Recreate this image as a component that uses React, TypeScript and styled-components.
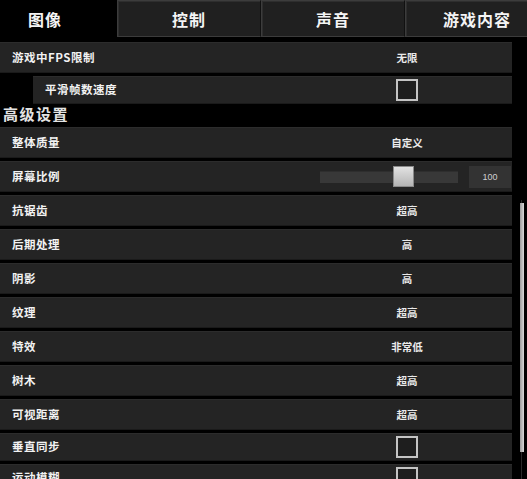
import React, {FC} from 'react';
import styled, {createGlobalStyle} from 'styled-components';

const GlobalStyle = createGlobalStyle`
  html, body {
    margin: 0;
    padding: 0;
    background: #000;
    overflow: hidden;
  }
  body {
    font-family: "Noto Sans CJK SC", "Liberation Sans", sans-serif;
    color: #fff;
  }
`;

const Screen = styled.div`
  width: 527px;
  height: 479px;
  position: relative;
  overflow: hidden;
  background: #000;
`;

const TabBar = styled.div`
  display: flex;
  height: 37px;
  margin-left: -27px;
`;

const Tab = styled.div<{ $active?: boolean }>`
  flex: 0 0 144px;
  box-sizing: border-box;
  display: flex;
  align-items: center;
  justify-content: center;
  font-size: 16px;
  font-weight: 700;
  letter-spacing: 1px;
  color: #f4f4f4;
  background: ${p => p.$active ? '#000' : '#202020'};
  border: ${p => p.$active ? 'none' : '1px solid #3c3c3c'};
  border-right-color: #111;
  box-shadow: ${p => p.$active ? 'none' : 'inset 1px 1px 0 #2e2e2e'};
`;

const List = styled.div`
  display: flex;
  flex-direction: column;
  gap: 3px;
  padding-top: 5px;
  width: 512px;
`;

const Row = styled.div<{ $indent?: boolean; $short?: boolean }>`
  box-sizing: border-box;
  display: flex;
  align-items: center;
  height: ${p => p.$short ? '28px' : '31px'};
  margin-left: ${p => p.$indent ? '33px' : '0'};
  background: #242424;
  border-top: 1px solid #2c2c2c;
  border-bottom: 1px solid #1a1a1a;
`;

const Label = styled.span`
  flex: 1;
  padding: 0 0 2px 12px;
  font-size: 11.5px;
  font-weight: 700;
  letter-spacing: 0.5px;
  color: #f2f2f2;
`;

const ValueCell = styled.div`
  flex: 0 0 210px;
  display: flex;
  align-items: center;
  justify-content: center;
  font-size: 10.5px;
  font-weight: 700;
  color: #eaeaea;
`;

const CheckBox = styled.div`
  width: 22px;
  height: 22px;
  box-sizing: border-box;
  border: 2px solid #c4c4c4;
  background: #1e1e1e;
`;

const SectionTitle = styled.div`
  padding: 0 0 0 3px;
  height: 17px;
  line-height: 16px;
  margin: -1px 0 1px;
  font-size: 15px;
  font-weight: 700;
  letter-spacing: 1.5px;
  color: #e4e4e4;
`;

const SliderWrap = styled.div`
  flex: 0 0 192px;
  display: flex;
  align-items: center;
  gap: 11px;
`;

const Track = styled.div`
  position: relative;
  width: 138px;
  height: 11px;
  background: #383838;
  border-top: 1px solid #2e2e2e;
`;

const Thumb = styled.div`
  position: absolute;
  top: -6px;
  width: 21px;
  height: 21px;
  background: linear-gradient(#e2e2e2, #b4b4b4);
  border: 1px solid #8a8a8a;
  box-sizing: border-box;
`;

const NumberBox = styled.div`
  width: 42px;
  height: 22px;
  display: flex;
  align-items: center;
  justify-content: center;
  background: #333;
  font-family: "Liberation Sans", sans-serif;
  font-size: 9px;
  color: #cfcfcf;
`;

const ScrollTrack = styled.div`
  position: absolute;
  right: 5px;
  top: 200px;
  bottom: 0;
  width: 1px;
  background: #2a2a2a;
`;

const ScrollThumb = styled.div`
  position: absolute;
  right: 3px;
  top: 203px;
  height: 249px;
  width: 4px;
  background: linear-gradient(90deg, #9a9a9a, #d8d8d8);
`;

type Setting = { label: string; value?: string; check?: boolean; slider?: number };

const SLIDER_MAX = 160;

const advanced: Setting[] = [
    {label: '整体质量', value: '自定义'},
    {label: '屏幕比例', slider: 100},
    {label: '抗锯齿', value: '超高'},
    {label: '后期处理', value: '高'},
    {label: '阴影', value: '高'},
    {label: '纹理', value: '超高'},
    {label: '特效', value: '非常低'},
    {label: '树木', value: '超高'},
    {label: '可视距离', value: '超高'},
    {label: '垂直同步', check: true},
    {label: '运动模糊', check: true},
];

const SettingRow: FC<{ item: Setting; indent?: boolean }> = ({item, indent}) => (
    <Row $indent={indent} $short={item.check}>
        <Label>{item.label}</Label>
        {item.slider !== undefined ? (
            <SliderWrap>
                <Track>
                    <Thumb style={{left: `${(item.slider / SLIDER_MAX) * 117}px`}}/>
                </Track>
                <NumberBox>{item.slider}</NumberBox>
            </SliderWrap>
        ) : (
            <ValueCell>{item.check ? <CheckBox/> : item.value}</ValueCell>
        )}
    </Row>
);

const App: FC = () => {
    const tabs = ['图像', '控制', '声音', '游戏内容'];

    return (
        <Screen>
            <GlobalStyle/>
            <TabBar>
                {tabs.map((t, i) => (
                    <Tab key={t} $active={i === 0}>{t}</Tab>
                ))}
            </TabBar>
            <List>
                <SettingRow item={{label: '游戏中FPS限制', value: '无限'}}/>
                <SettingRow indent item={{label: '平滑帧数速度', check: true}}/>
                <SectionTitle>高级设置</SectionTitle>
                {advanced.map(item => (
                    <SettingRow key={item.label} item={item}/>
                ))}
            </List>
            <ScrollTrack/>
            <ScrollThumb/>
        </Screen>
    );
};

export default App;
